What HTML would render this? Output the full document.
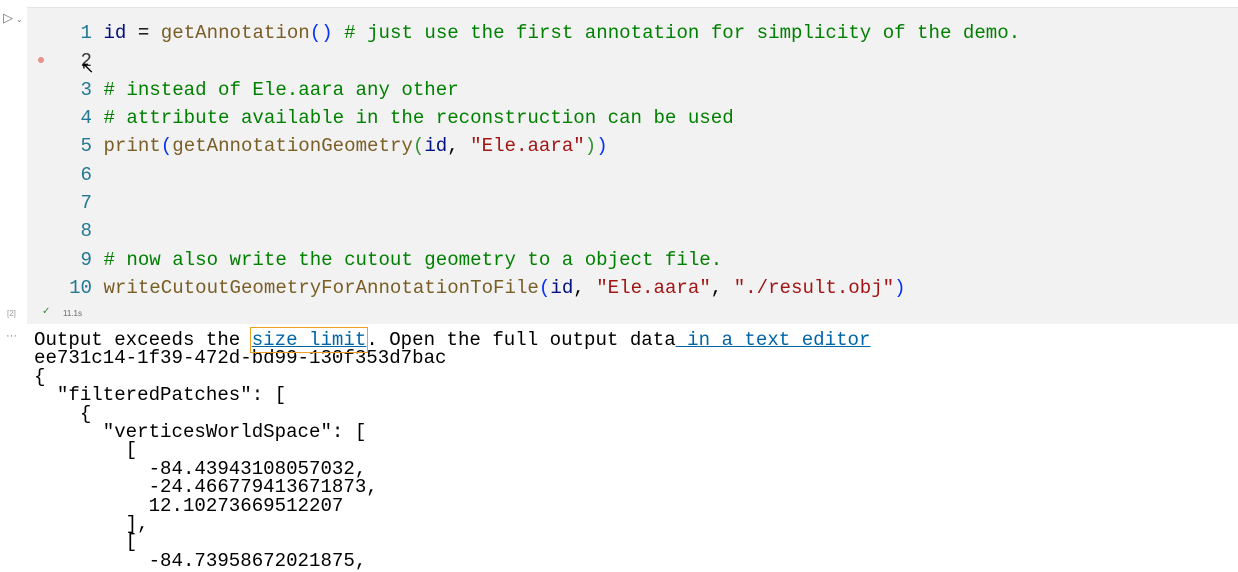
<!DOCTYPE html>
<html><head><style>
body{margin:0;width:1238px;height:563px;background:#fff;position:relative;overflow:hidden;font-family:"Liberation Mono",monospace}
.cell{position:absolute;left:27px;top:7px;width:1211px;height:316px;background:#f2f2f2;border-top:1px solid #e5e5e5}
.code{position:absolute;left:0;top:19px;font-size:19.1px;line-height:28.33px;white-space:pre}
.ln{color:#237893;display:inline-block;width:92px;text-align:right}
.c{color:#008000}.f{color:#795e26}.v{color:#001080}.s{color:#a31515}.p{color:#0431fa}.k{color:#000}
.out{position:absolute;left:34px;top:331px;font-size:19.1px;line-height:18.4px;white-space:pre;color:#000}
a{color:#0065a8;text-decoration:underline}
</style></head><body>
<div class="cell"></div>
<div style="position:absolute;left:3px;top:10px;font-size:13px;color:#777;font-family:'Liberation Sans',sans-serif">▷<span style="font-size:8px;margin-left:3px">⌄</span></div>
<div style="position:absolute;left:38px;top:57px;width:6px;height:6px;border-radius:50%;background:#e8908c"></div>
<div class="code"><span class="ln">1</span> <span class="v">id</span> <span class="k">=</span> <span class="f">getAnnotation</span><span class="p">()</span> <span class="c"># just use the first annotation for simplicity of the demo.</span>
<span class="ln" style="color:#333">2</span>
<span class="ln">3</span> <span class="c"># instead of Ele.aara any other</span>
<span class="ln">4</span> <span class="c"># attribute available in the reconstruction can be used</span>
<span class="ln">5</span> <span class="f">print</span><span class="p">(</span><span class="f">getAnnotationGeometry</span><span style="color:#319331">(</span><span class="v">id</span>, <span class="s">"Ele.aara"</span><span style="color:#319331">)</span><span class="p">)</span>
<span class="ln">6</span>
<span class="ln">7</span>
<span class="ln">8</span>
<span class="ln">9</span> <span class="c"># now also write the cutout geometry to a object file.</span>
<span class="ln">10</span> <span class="f">writeCutoutGeometryForAnnotationToFile</span><span class="p">(</span><span class="v">id</span>, <span class="s">"Ele.aara"</span>, <span class="s">"./result.obj"</span><span class="p">)</span></div>
<div style="position:absolute;left:81px;top:58px;font-size:16px;color:#000">↖</div>
<div style="position:absolute;left:7px;top:309px;font-size:8px;color:#999;font-family:'Liberation Sans',sans-serif">[2]</div>
<div style="position:absolute;left:42px;top:306px;font-size:10px;color:#388a34;font-family:'Liberation Sans',sans-serif">✓</div>
<div style="position:absolute;left:63px;top:309px;font-size:8px;color:#666;font-family:'Liberation Sans',sans-serif">11.1s</div>
<div style="position:absolute;left:6px;top:330px;font-size:11px;color:#777;font-family:'Liberation Sans',sans-serif">···</div>
<div class="out">Output exceeds the <a style="outline:1px solid #f0a020;outline-offset:1px">size limit</a>. Open the full output data<a> in a text editor</a>
ee731c14-1f39-472d-bd99-130f353d7bac
{
  "filteredPatches": [
    {
      "verticesWorldSpace": [
        [
          -84.43943108057032,
          -24.466779413671873,
          12.10273669512207
        ],
        [
          -84.73958672021875,</div>
</body></html>
